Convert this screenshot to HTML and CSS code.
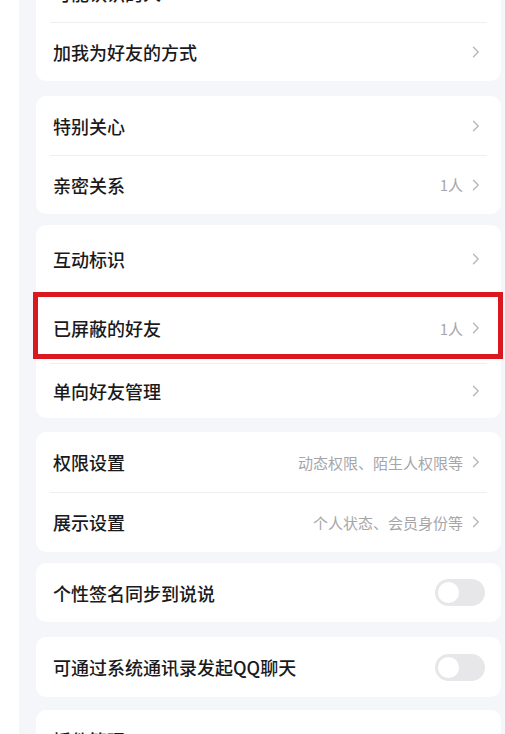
FILE: index.html
```html
<!DOCTYPE html>
<html lang="zh-CN">
<head>
<meta charset="utf-8">
<title>好友设置</title>
<link rel="stylesheet" href="styles.css">
</head>
<body>
<div class="page">
  <div class="list">
    <section class="card">
      <div class="row h59"><span class="label">可能认识的人</span><span class="right"><svg class="chev" viewBox="0 0 8 12"><path d="M1.5 1.2 L6.2 6 L1.5 10.8"/></svg></span></div>
      <div class="row h59"><span class="label">加我为好友的方式</span><span class="right"><svg class="chev" viewBox="0 0 8 12"><path d="M1.5 1.2 L6.2 6 L1.5 10.8"/></svg></span></div>
    </section>
    <section class="card">
      <div class="row h59"><span class="label">特别关心</span><span class="right"><svg class="chev" viewBox="0 0 8 12"><path d="M1.5 1.2 L6.2 6 L1.5 10.8"/></svg></span></div>
      <div class="row h59"><span class="label">亲密关系</span><span class="right"><span class="value">1人</span><svg class="chev" viewBox="0 0 8 12"><path d="M1.5 1.2 L6.2 6 L1.5 10.8"/></svg></span></div>
    </section>
    <section class="card card-3">
      <div class="row h68"><span class="label">互动标识</span><span class="right"><svg class="chev" viewBox="0 0 8 12"><path d="M1.5 1.2 L6.2 6 L1.5 10.8"/></svg></span></div>
      <div class="row h70 marked"><span class="label">已屏蔽的好友</span><span class="right"><span class="value">1人</span><svg class="chev" viewBox="0 0 8 12"><path d="M1.5 1.2 L6.2 6 L1.5 10.8"/></svg></span><span class="highlight"></span></div>
      <div class="row h55"><span class="label">单向好友管理</span><span class="right"><svg class="chev" viewBox="0 0 8 12"><path d="M1.5 1.2 L6.2 6 L1.5 10.8"/></svg></span></div>
    </section>
    <section class="card card-4">
      <div class="row h60"><span class="label">权限设置</span><span class="right"><span class="value">动态权限、陌生人权限等</span><svg class="chev" viewBox="0 0 8 12"><path d="M1.5 1.2 L6.2 6 L1.5 10.8"/></svg></span></div>
      <div class="row h60"><span class="label">展示设置</span><span class="right"><span class="value">个人状态、会员身份等</span><svg class="chev" viewBox="0 0 8 12"><path d="M1.5 1.2 L6.2 6 L1.5 10.8"/></svg></span></div>
    </section>
    <section class="card card-5">
      <div class="row h59"><span class="label">个性签名同步到说说</span><span class="toggle"><span class="knob"></span></span></div>
    </section>
    <section class="card card-6">
      <div class="row h60"><span class="label">可通过系统通讯录发起QQ聊天</span><span class="toggle"><span class="knob"></span></span></div>
    </section>
    <section class="card card-7">
      <div class="row h59"><span class="label">插件管理</span><span class="right"><svg class="chev" viewBox="0 0 8 12"><path d="M1.5 1.2 L6.2 6 L1.5 10.8"/></svg></span></div>
    </section>
  </div>
</div>
</body>
</html>
```

FILE: styles.css
```css
html, body {
  margin: 0;
  padding: 0;
  background: #ffffff;
  height: 100%;
  overflow: hidden;
}

body {
  font-family: "Noto Sans CJK SC", "Noto Sans", sans-serif;
  color: #1c1c1e;
}

.page {
  margin-left: 19px;
  background: #f5f6f9;
  height: 734px;
  overflow: hidden;
  padding: 0 4px 0 17px;
}

.list {
  display: flex;
  flex-direction: column;
  margin-top: -37px;
}

.card {
  background: #ffffff;
  border-radius: 10px;
  margin-bottom: 15px;
}

.card-3 { margin-top: -4px; }
.card-4 { margin-top: -1px; }
.card-5 { margin-top: -4px; }
.card-7 { margin-top: -2px; }

.row {
  position: relative;
  display: flex;
  align-items: center;
  justify-content: space-between;
  padding: 0 21px 0 17px;
}

.row + .row::before {
  content: "";
  position: absolute;
  top: 0;
  left: 14px;
  right: 14px;
  height: 1px;
  background: #efeff1;
}

.h55 { height: 55px; }
.h59 { height: 59px; }
.h60 { height: 60px; }
.h68 { height: 68px; }
.h70 { height: 70px; }

.label {
  font-size: 18px;
  font-weight: 500;
  line-height: 1;
  color: #1a1a1c;
}

.right {
  display: flex;
  align-items: center;
  gap: 9px;
}

.value {
  font-size: 15px;
  line-height: 1;
  color: #a6a6a9;
}

.chev {
  width: 8px;
  height: 12px;
  fill: none;
  stroke: #b6b6ba;
  stroke-width: 1.3;
  stroke-linecap: round;
  stroke-linejoin: round;
}

.toggle {
  width: 50px;
  height: 27px;
  border-radius: 14px;
  background: #e7e7e9;
  display: flex;
  align-items: center;
  padding-left: 3px;
  box-sizing: border-box;
  margin-right: -5px;
}

.knob {
  width: 21px;
  height: 21px;
  border-radius: 50%;
  background: #ffffff;
}

.highlight {
  position: absolute;
  top: -1px;
  left: -3px;
  right: -2px;
  bottom: 4px;
  border: 5px solid #d9191f;
  box-sizing: border-box;
  pointer-events: none;
}
```
